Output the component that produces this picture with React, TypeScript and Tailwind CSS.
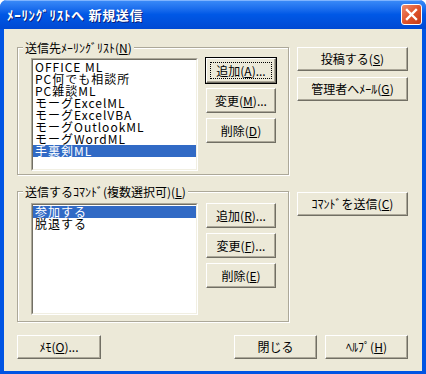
import React from 'react';

const face = "font-['Noto_Sans_CJK_JP','Noto_Sans',sans-serif]";

// classic raised button (XP with classic-looking buttons)
function Btn({ children, className = '', def = false }: { children: React.ReactNode; className?: string; def?: boolean }) {
  return (
    <div
      className={`relative flex items-center justify-center bg-[#ECE9D8] border border-t-white border-l-white border-r-[#716F64] border-b-[#716F64] shadow-[inset_-1px_-1px_0_#ACA899] text-[12px] leading-none text-black ${
        def ? 'outline outline-1 outline-black shadow-[inset_-1px_-1px_0_#ACA899,0_0_0_2px_#ff0000]' : ''
      } ${className}`}
    >
      {def && <div className="absolute inset-[3px] border border-dotted border-black" />}
      <span className="relative">{children}</span>
    </div>
  );
}

function ListBox({ items, selected, className = '' }: { items: string[]; selected: number; className?: string }) {
  return (
    <div className={`bg-white border border-t-[#ACA899] border-l-[#ACA899] border-r-white border-b-white ${className}`}>
      <div className="h-full border border-t-[#716F64] border-l-[#716F64] border-r-[#F1EFE2] border-b-[#F1EFE2] pt-[1px]">
        {items.map((it, i) => (
          <div
            key={it}
            className={`h-[12px] leading-[12px] pl-[2px] text-[12px] tracking-[1px] whitespace-nowrap ${
              i === selected ? 'bg-[#316AC5] text-white' : 'text-black'
            }`}
          >
            {it}
          </div>
        ))}
      </div>
    </div>
  );
}

function Group({ label, children, className = '' }: { label: React.ReactNode; children: React.ReactNode; className?: string }) {
  return (
    <div className={`relative border border-[#ACA899] shadow-[inset_1px_1px_0_white,1px_1px_0_white] ${className}`}>
      {/* label sits on top of the etched line */}
      <div className="absolute left-[5px] top-[-7px] bg-[#ECE9D8] px-[2px] text-[12px] leading-[13px] text-black whitespace-nowrap">
        {label}
      </div>
      {children}
    </div>
  );
}

export default function App() {
  return (
    <div className={`w-[426px] h-[374px] flex flex-col bg-[#0054E3] rounded-t-[7px] overflow-hidden ${face}`}>
      {/* title bar */}
      <div className="h-[29px] shrink-0 flex items-center pl-[7px] pr-[4px] bg-gradient-to-b from-[#3C8CF8] via-[#0058E6] to-[#0049D3] shadow-[inset_0_1px_0_#7FB4FF]">
        <span className="text-white font-bold text-[13px] tracking-[0.7px] [text-shadow:1px_1px_0_#0A1E7A]">ﾒｰﾘﾝｸﾞﾘｽﾄへ 新規送信</span>
        <div className="ml-auto w-[21px] h-[21px] rounded-[3px] border border-white bg-gradient-to-br from-[#EE8A6B] via-[#E0542C] to-[#C53A16] flex items-center justify-center">
          <svg width="13" height="13" viewBox="0 0 13 13">
            <path d="M2 2 L11 11 M11 2 L2 11" stroke="white" strokeWidth="2.4" strokeLinecap="square" />
          </svg>
        </div>
      </div>

      {/* client area */}
      <div className="flex-1 mx-[4px] mb-[3px] bg-[#ECE9D8] pl-[13px] pr-[14px] pt-[18px] text-black">
        <div className="flex gap-[8px] items-start">
          <Group
            className="w-[272px] h-[128px] flex gap-[8px] pl-[13px] pt-[10px]"
            label={<>送信先ﾒｰﾘﾝｸﾞﾘｽﾄ(<u>N</u>)</>}
          >
            <ListBox
              className="w-[167px] h-[113px]"
              selected={7}
              items={['OFFICE ML', 'PC何でも相談所', 'PC雑談ML', 'モーグExcelML', 'モーグExcelVBA', 'モーグOutlookML', 'モーグWordML', '手裏剣ML']}
            />
            <div className="flex flex-col gap-[5px]">
              <Btn def className="w-[70px] h-[25px]">追加(<u>A</u>)...</Btn>
              <Btn className="w-[70px] h-[25px]">変更(<u>M</u>)...</Btn>
              <Btn className="w-[70px] h-[25px]">削除(<u>D</u>)</Btn>
            </div>
          </Group>
          <div className="flex flex-col gap-[6px]">
            <Btn className="w-[111px] h-[24px]">投稿する(<u>S</u>)</Btn>
            <Btn className="w-[111px] h-[24px]">管理者へﾒｰﾙ(<u>G</u>)</Btn>
          </div>
        </div>

        <div className="flex gap-[8px] items-start mt-[16px]">
          <Group
            className="w-[272px] h-[131px] flex gap-[8px] pl-[13px] pt-[11px]"
            label={<>送信するｺﾏﾝﾄﾞ(複数選択可)(<u>L</u>)</>}
          >
            <ListBox className="w-[167px] h-[112px]" selected={0} items={['参加する', '脱退する']} />
            <div className="flex flex-col gap-[5px]">
              <Btn className="w-[70px] h-[25px]">追加(<u>R</u>)...</Btn>
              <Btn className="w-[70px] h-[25px]">変更(<u>F</u>)...</Btn>
              <Btn className="w-[70px] h-[25px]">削除(<u>E</u>)</Btn>
            </div>
          </Group>
          <Btn className="w-[111px] h-[24px] mt-[1px]">ｺﾏﾝﾄﾞを送信(<u>C</u>)</Btn>
        </div>

        <div className="flex mt-[13px]">
          <Btn className="w-[84px] h-[24px]">ﾒﾓ(<u>O</u>)...</Btn>
          <div className="ml-auto flex gap-[8px]">
            <Btn className="w-[83px] h-[24px]">閉じる</Btn>
            <Btn className="w-[83px] h-[24px]">ﾍﾙﾌﾟ(<u>H</u>)</Btn>
          </div>
        </div>
      </div>
    </div>
  );
}
